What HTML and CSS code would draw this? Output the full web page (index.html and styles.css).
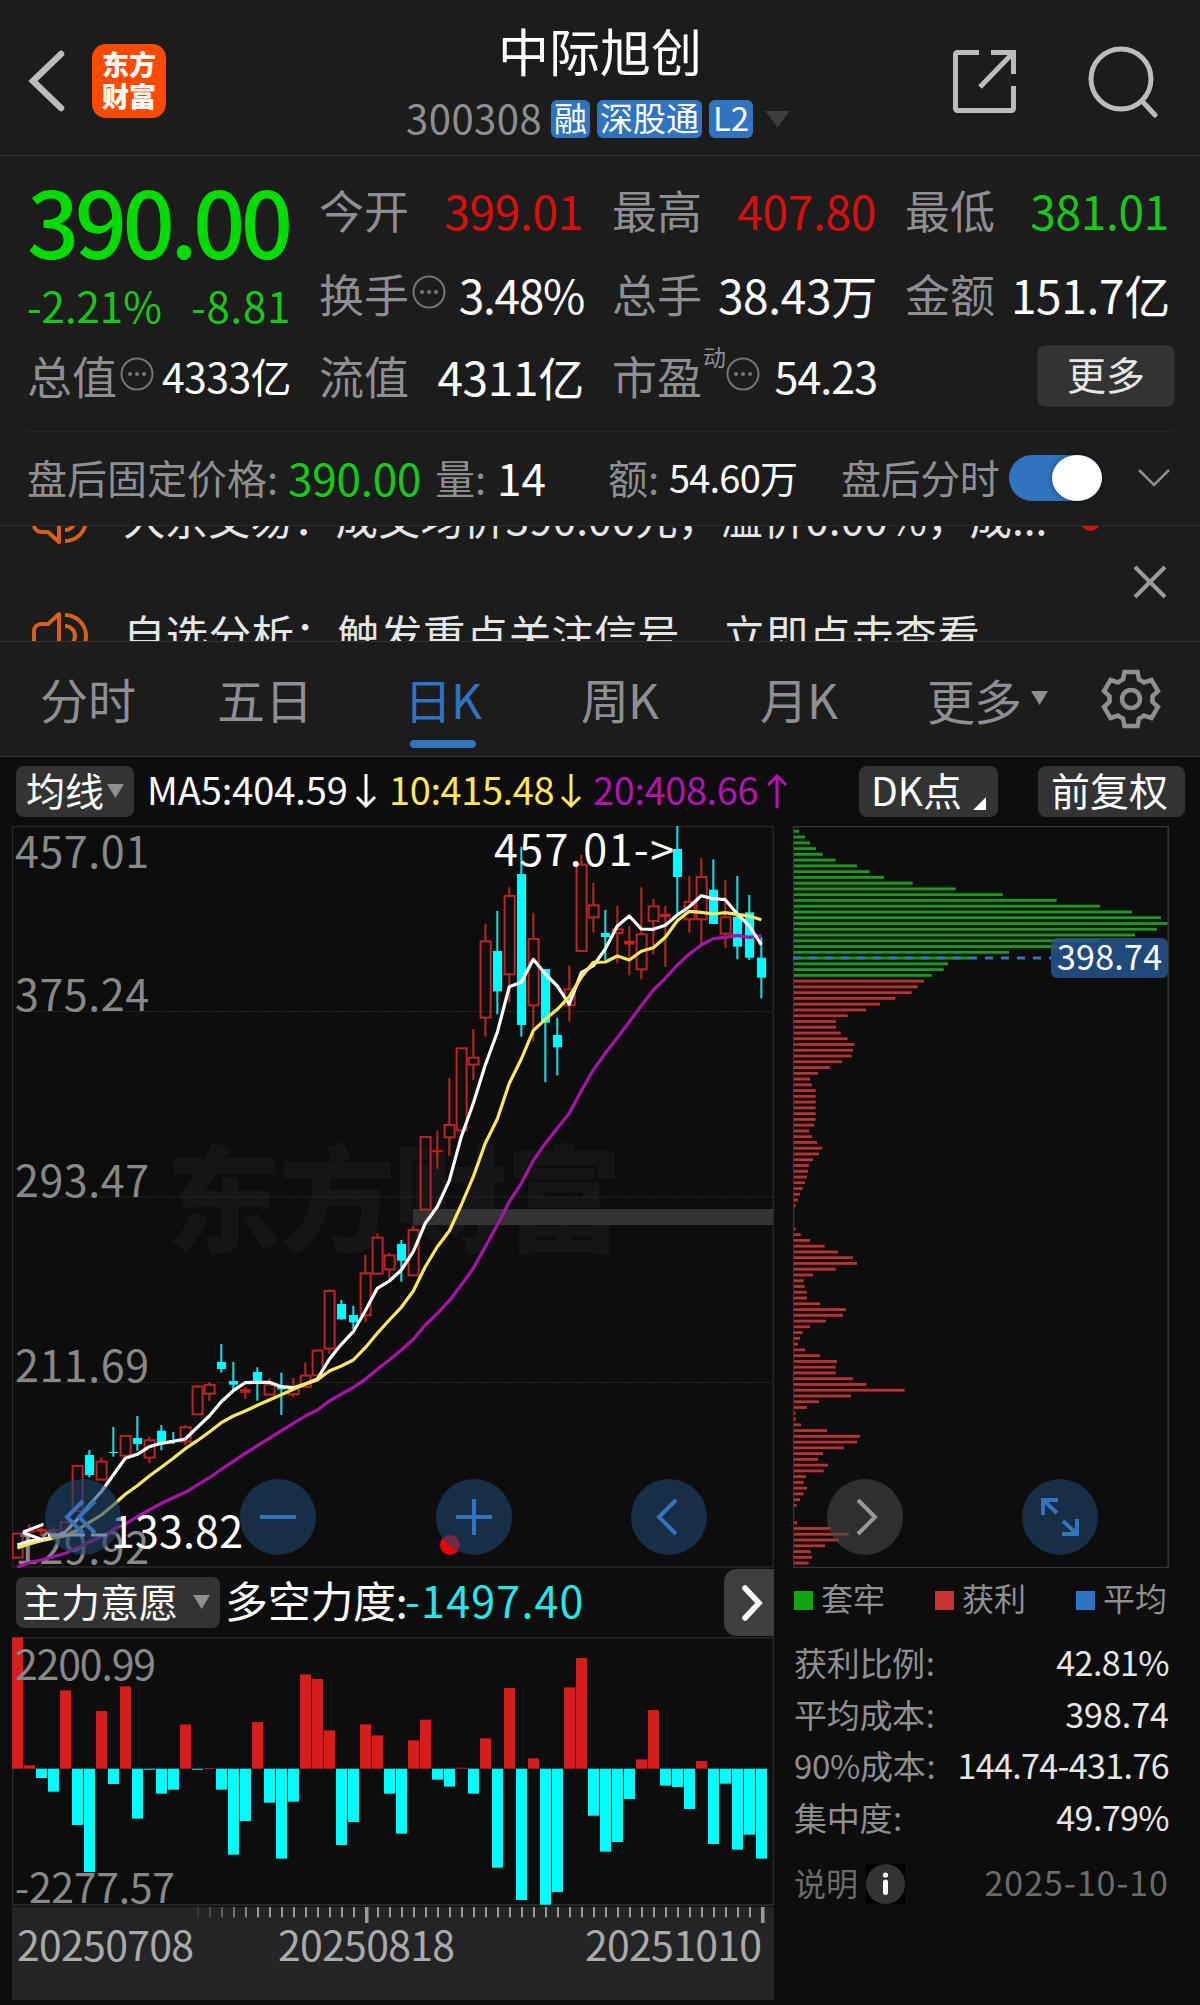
FILE: index.html
```html
<!DOCTYPE html>
<html lang="zh-CN">
<head>
<meta charset="utf-8">
<title>中际旭创 300308</title>
<link rel="stylesheet" href="styles.css">
</head>
<body>
<header class="topbar">
  <div class="top-left">
    <svg class="back" width="38" height="62" viewBox="0 0 38 62"><path d="M33 4 5 31 33 58"/></svg>
    <div class="logo"><span>东方</span><span>财富</span></div>
  </div>
  <div class="title">
    <h1>中际旭创</h1>
    <div class="code-row">
      <span class="code">300308</span>
      <span class="tag tag-rong">融</span><span class="tag tag-sgt">深股通</span><span class="tag tag-l2">L2</span>
      <i class="caret caret-title"></i>
    </div>
  </div>
  <div class="top-right">
    <svg width="66" height="66" viewBox="0 0 66 66"><path d="M27 3.5H5.5a2 2 0 0 0-2 2v54a2 2 0 0 0 2 2h54a2 2 0 0 0 2-2V37M39 3.500H61.500V25M61 4 28 38"/></svg>
    <svg width="74" height="74" viewBox="0 0 74 74"><circle cx="34" cy="34" r="30"/><path d="M55 56 68 70" stroke-linecap="round"/></svg>
  </div>
</header>

<section class="quote">
  <div class="col first">
    <div class="price">390.00</div>
    <div class="change"><span>-2.21%</span><span class="diff">-8.81</span></div>
    <div class="cell small"><label>总值</label><svg class="dots" viewBox="0 0 34 34"><circle cx="17" cy="17" r="15.500"/><path d="M10 17h.1M17 17h.1M24 17h.1"/></svg><b>4333亿</b></div>
  </div>
  <div class="col">
    <div class="cell"><label>今开</label><b class="red">399.01</b></div>
    <div class="cell"><label>换手</label><svg class="dots" viewBox="0 0 34 34"><circle cx="17" cy="17" r="15.500"/><path d="M10 17h.1M17 17h.1M24 17h.1"/></svg><b class="turn">3.48%</b></div>
    <div class="cell last"><label>流值</label><b>4311亿</b></div>
  </div>
  <div class="col">
    <div class="cell"><label>最高</label><b class="red">407.80</b></div>
    <div class="cell"><label>总手</label><b>38.43万</b></div>
    <div class="cell last pe"><label>市盈</label><sup>动</sup><svg class="dots" viewBox="0 0 34 34"><circle cx="17" cy="17" r="15.500"/><path d="M10 17h.1M17 17h.1M24 17h.1"/></svg><b>54.23</b></div>
  </div>
  <div class="col">
    <div class="cell"><label>最低</label><b class="green">381.01</b></div>
    <div class="cell"><label>金额</label><b>151.7亿</b></div>
    <div class="cell last more-cell"><button class="more">更多</button></div>
  </div>
</section>

<section class="after">
  <label class="l1">盘后固定价格:</label><b class="v1">390.00</b>
  <label class="l2">量:</label><b class="v2">14</b>
  <label class="l3">额:</label><b class="v3">54.60万</b>
  <label class="l4">盘后分时</label>
  <span class="toggle"><i></i></span>
  <svg width="36" height="24" viewBox="0 0 36 24"><path d="M3 4 18 19 33 4"/></svg>
</section>

<section class="news">
  <div class="news-list">
    <div class="news-row">
      <svg width="56" height="48" viewBox="0 0 56 48"><path d="M27 2 16 12H9a7 7 0 0 0-7 7v10a7 7 0 0 0 7 7h7l11 10ZM33 3a21 21 0 0 1 0 42M33 14a10 10 0 0 1 0 20"/></svg>
      <span class="n1">大宗交易：成交均价390.00元，溢价0.00%，成...</span><i class="red-dot"></i>
    </div>
    <div class="news-row">
      <svg width="56" height="48" viewBox="0 0 56 48"><path d="M27 2 16 12H9a7 7 0 0 0-7 7v10a7 7 0 0 0 7 7h7l11 10ZM33 3a21 21 0 0 1 0 42M33 14a10 10 0 0 1 0 20"/></svg>
      <span>自选分析：触发重点关注信号，立即点击查看</span>
    </div>
  </div>
  <svg class="close" width="34" height="34" viewBox="0 0 34 34"><path d="M2 2 32 32M32 2 2 32"/></svg>
</section>

<nav class="tabs">
  <a class="t1">分时</a><a class="t2">五日</a><a class="t3 active">日K</a><a class="t4">周K</a><a class="t5">月K</a>
  <a class="t6">更多<i class="caret caret-tab"></i></a>
  <svg width="60" height="60" viewBox="-30 -30 60 60"><path d="M-6.500-27H6.500L8-19.500A21 21 0 0 1 13-16.500L20.500-19 27-8 21.500-2.800V2.800L27 8 20.500 19 13 16.500A21 21 0 0 1 8 19.500L6.500 27H-6.500L-8 19.500A21 21 0 0 1-13 16.500L-20.500 19-27 8-21.500 2.800V-2.800L-27-8-20.500-19-13-16.500A21 21 0 0 1-8-19.500Z"/><circle r="9"/></svg>
</nav>

<section class="ma-row">
  <button class="btn b-ma">均线<i class="caret caret-btn"></i></button>
  <span class="m5">MA5:404.59</span><svg class="arr a5" width="22" height="36" viewBox="0 0 22 36"><path d="M11 1V33M2 24 11 33 20 24"/></svg>
  <span class="m10">10:415.48</span><svg class="arr a10" width="22" height="36" viewBox="0 0 22 36"><path d="M11 1V33M2 24 11 33 20 24"/></svg>
  <span class="m20">20:408.66</span><svg class="arr a20" width="22" height="36" viewBox="0 0 22 36"><path d="M11 35V3M2 12 11 3 20 12"/></svg>
  <button class="btn b-dk">DK点<i class="corner"></i></button>
  <button class="btn b-fq">前复权</button>
</section>

<main class="charts">
  <div class="left">
    <svg id="kline" width="762" height="742" viewBox="12 826 762 742"></svg>
    <div class="ind-row">
      <button class="btn b-ind">主力意愿<i class="caret caret-btn"></i></button>
      <span class="ind-name">多空力度:</span><span class="ind-val">-1497.40</span>
      <button class="next"><svg width="24" height="38" viewBox="0 0 24 38"><path d="M5 4 19 19 5 34"/></svg></button>
    </div>
    <svg id="force" width="762" height="270" viewBox="12 1637 762 270"></svg>
    <svg id="axis" width="762" height="93" viewBox="12 1907 762 93"></svg>
  </div>
  <div class="right">
    <svg id="chips" width="376" height="742" viewBox="793 826 376 742"></svg>
    <div class="legend"><span><i class="g"></i>套牢</span><span><i class="r"></i>获利</span><span><i class="b"></i>平均</span></div>
    <dl class="stats">
      <div><dt>获利比例<u>:</u></dt><dd>42.81%</dd></div>
      <div><dt>平均成本<u>:</u></dt><dd class="avg">398.74</dd></div>
      <div><dt class="n90">90%成本<u>:</u></dt><dd class="range">144.74-431.76</dd></div>
      <div><dt>集中度<u>:</u></dt><dd>49.79%</dd></div>
    </dl>
    <div class="note"><span>说明</span><svg width="39" height="40" viewBox="0 0 39 40"><rect width="39" height="40" fill="#000"/><ellipse cx="19.500" cy="20" rx="19.500" ry="20" fill="#333"/><path d="M19.500 18V28.500" stroke="#fff" stroke-width="5" stroke-linecap="round"/><circle cx="19.500" cy="11" r="2.600" fill="#fff"/></svg><time>2025-10-10</time></div>
  </div>
  <div class="controls">
    <button><svg viewBox="-38 -38 76 76"><path d="M0-16-16 0 0 16M12-16-4 0 12 16"/></svg></button>
    <button><svg viewBox="-38 -38 76 76"><path d="M-18 0H18"/></svg></button>
    <button><svg viewBox="-38 -38 76 76"><path d="M-18 0H18M0-18V18"/></svg></button>
    <button><svg viewBox="-38 -38 76 76"><path d="M7-17-10 0 7 17"/></svg></button>
    <button class="grey"><svg viewBox="-38 -38 76 76"><path d="M-7-17 10 0-7 17"/></svg></button>
    <button><svg viewBox="-38 -38 76 76"><path d="M-17-2V-17H-2M-17-17-3-4M17 2V17H2M17 17 3 4"/></svg></button>
  </div>
</main>
<script src="chart.js"></script>
</body>
</html>
```
FILE: styles.css
```css
* { box-sizing: border-box; }
body { margin: 0; width: 1200px; height: 2005px; overflow: hidden; background: #0d0d0d; color: #fff; font-family: "Noto Sans CJK SC", sans-serif; line-height: 1; }
button { border: 0; padding: 0; margin: 0; font: inherit; color: inherit; }
h1, dl, dd { margin: 0; font-weight: 400; }
b { font-weight: 400; }
svg { display: block; flex: none; }
span, label, b, a, time { white-space: nowrap; }
.red { color: #d80f0f; }
.green { color: #17c917; }
.caret { display: block; width: 18px; height: 14px; background: #8e8e93; clip-path: polygon(0 0, 100% 0, 50% 100%); }

.topbar { height: 156px; background: #1c1c1c; border-bottom: 1px solid #333; display: grid; grid-template-columns: 400px 400px 400px; }
.top-left { display: flex; align-items: flex-start; padding: 44px 0 0 28px; }
.back { margin-top: 6px; fill: none; stroke: #bcbcbc; stroke-width: 6.500; stroke-linecap: round; }
.logo { margin-left: 26px; width: 74px; height: 74px; border-radius: 14px; background: #ff4a00; font-size: 27px; font-weight: 900; display: flex; flex-direction: column; align-items: center; padding-top: 4px; }
.logo span { height: 32px; line-height: 32px; }
.title { padding-top: 24px; }
.title h1 { height: 74px; line-height: 52px; font-size: 51px; text-align: center; }
.code-row { display: flex; align-items: center; height: 40px; margin-top: 1px; padding-left: 6px; }
.code { font-size: 40px; color: #8e8e93; letter-spacing: .5px; width: 145px; line-height: 36px; margin-top: -5px; }
.tag { height: 38px; line-height: 35px; border-radius: 6px; background: #3073c0; font-size: 33px; text-align: center; margin-right: 7px; }
.tag-rong { width: 39px; }
.tag-sgt { width: 105px; }
.tag-l2 { width: 44px; }
.caret-title { background: #3d3d3d; width: 25px; height: 17px; margin-left: 5px; }
.top-right { display: flex; padding: 49px 0 0 152px; }
.top-right svg { fill: none; stroke: #bcbcbc; stroke-width: 5; }
.top-right svg + svg { margin: -4px 0 0 69px; }

.quote { height: 275px; background: #1c1c1c; padding: 14px 0 0 27px; display: grid; grid-template-columns: 264px 265px 265px 265px; column-gap: 28px; }
.cell { height: 84px; display: flex; align-items: center; justify-content: space-between; font-size: 46px; padding-bottom: 5px; }
.cell label { font-size: 45px; color: #8e8e93; }
.cell.last, .cell.small { height: 80px; }
.cell b { margin-left: auto; letter-spacing: -.3px; }
.cell .red, .cell .green { padding-right: 1px; }
.cell .turn { letter-spacing: -1.300px; }
.cell.small b { font-size: 41px; letter-spacing: -.6px; }
.cell .dots { width: 34px; height: 34px; margin: 0 0 3px 3px; }
.dots { fill: none; stroke: #757575; stroke-width: 2; }
.dots path { stroke-width: 4; stroke-linecap: round; }
.price { height: 108px; line-height: 98px; font-size: 92px; font-weight: 500; letter-spacing: -4.700px; color: #00dc00; }
.change { height: 60px; line-height: 54px; display: flex; justify-content: space-between; color: #17c917; font-size: 42px; }
.diff { letter-spacing: .7px; }
.cell.pe b { font-size: 43px; letter-spacing: -1px; }
.pe sup { font-size: 23px; color: #8e8e93; align-self: flex-start; margin: 7px 0 0 1px; line-height: 1; }
.pe .dots { margin-left: 0; }
.more-cell { justify-content: flex-end; padding: 0; margin-right: -5px; }
.more { width: 138px; height: 62px; margin-bottom: 5px; border-radius: 8px; background: #333; border: 1px solid #2b2b2b; font-size: 39px; line-height: 54px; padding-bottom: 7px; color: #e6e6e6; }

.after { height: 95px; background: #1c1c1c; border-bottom: 1px solid #2a2a2a; display: flex; align-items: center; padding: 0 27px; background-image: linear-gradient(#272727, #272727); background-size: 1146px 1px; background-position: 27px 0; background-repeat: no-repeat; font-size: 40px; }
.after label, .after b { line-height: 60px; margin-bottom: 3px; }
.after label { color: #8e8e93; }
.l1 { width: 261px; }
.v1 { width: 147px; font-size: 44px; letter-spacing: -.200px; color: #17c917; }
.l2 { width: 62px; }
.v2 { width: 111px; font-size: 44px; }
.l3 { width: 61px; }
.v3 { width: 172px; font-size: 38px; letter-spacing: -.8px; }
.after .l4 { width: 168px; letter-spacing: -.4px; }
.toggle { width: 93px; height: 46px; border-radius: 23px; background: #3073c0; display: flex; justify-content: flex-end; }
.toggle i { width: 50px; height: 46px; border-radius: 50%; background: #fff; box-shadow: 0 0 6px rgba(0,0,0,.4); }
.after svg { margin-left: 34px; fill: none; stroke: #8e8e93; stroke-width: 2.500; }

.news { height: 115px; background: #1c1c1c; overflow: hidden; display: flex; justify-content: space-between; padding: 0 33px 0 32px; }
.news-list { margin-top: -64px; }
.news-row { height: 116px; display: flex; align-items: center; font-size: 42.500px; color: #e6e6e6; }
.news-row svg { fill: none; stroke: #d9601a; stroke-width: 4; stroke-linejoin: round; }
.news-row span { margin: -6px 0 0 35px; width: 937px; letter-spacing: .35px; }
.news-row .n1 { letter-spacing: 0; }
.red-dot { width: 19px; height: 19px; border-radius: 50%; background: #d80f0f; margin: 2px 0 0 21px; }
.close { margin-top: 39px; fill: none; stroke: #9a9a9a; stroke-width: 4; }

.tabs { height: 116px; background: #1c1c1c; border-top: 1px solid #333; border-bottom: 1px solid #333; display: flex; align-items: center; padding-left: 40px; font-size: 48px; color: #8e8e93; }
.tabs a { height: 100%; line-height: 112px; }
.t1 { width: 177px; }
.t2 { width: 193px; }
.t3, .t4, .t5 { letter-spacing: -1px; }
.t3.active { color: #3073c0; width: 66px; margin-right: 105px; text-indent: -6px; }
.t3.active::after { content: ""; display: block; height: 8px; margin-top: -14px; border-radius: 4px; background: #3073c0; }
.t4 { width: 179px; }
.t5 { width: 167px; }
.t6 { width: 174px; display: flex; align-items: center; letter-spacing: -1px; }
.caret-tab { margin-left: 10px; width: 17px; margin-top: -2px; }
.tabs svg { fill: none; stroke: #8e8e93; stroke-width: 4.500; }

.ma-row { height: 69px; display: flex; align-items: flex-start; padding: 9px 0 0 16px; font-size: 38px; }
.ma-row > span { line-height: 46px; height: 50px; letter-spacing: -.4px; }
.btn { height: 51px; border-radius: 8px; background: #333; display: flex; align-items: flex-start; line-height: 46px; font-size: 39px; flex: none; white-space: nowrap; }
.caret-btn { width: 17px; margin-top: 18px; }
.b-ma { width: 118px; padding-left: 10px; }
.b-ma .caret { margin-left: 3px; }
.ma-row .m5 { width: 208px; margin-left: 13px; letter-spacing: -.1px; }
.arr { fill: none; stroke-width: 3; stroke: #fff; margin-top: 7px; }
.m10 { width: 171px; margin-left: 12px; color: #fce95e; }
.a10 { stroke: #fce95e; }
.m20 { width: 173px; margin-left: 11px; color: #b114b1; }
.a20 { stroke: #b114b1; }
.b-dk { width: 139px; margin-left: 71px; padding-left: 12px; }
.corner { width: 13px; height: 13px; background: #fff; clip-path: polygon(100% 0, 100% 100%, 0 100%); margin: 31px 0 0 11px; }
.b-fq { width: 147px; margin-left: 40px; padding-left: 13px; }

.charts { position: relative; display: flex; padding-left: 12px; height: 1179px; }
.left { width: 762px; }
.right { width: 376px; margin-left: 19px; }
svg text { font-family: "Noto Sans CJK SC", sans-serif; }
.ind-row { height: 69px; display: flex; padding-left: 4px; align-items: flex-start; font-size: 43px; line-height: 56px; }
.b-ind { width: 204px; margin-top: 9px; padding-left: 6px; }
.b-ind .caret { margin-left: 15px; }
.ind-name { width: 179px; margin: 3px 0 0 5px; letter-spacing: -.3px; }
.ind-val { margin: 3px 0 0 1px; color: #27e6e6; letter-spacing: 1.200px; }
.next { width: 50px; height: 67px; margin: 1px 0 0 auto; border-radius: 13px 0 0 13px; background: #3e3e3e; padding-left: 16px; }
.next svg { fill: none; stroke: #fff; stroke-width: 5.500; stroke-linecap: round; }

.controls { position: absolute; left: 45px; top: 653px; display: flex; gap: 119.400px; }
.controls button { width: 76px; height: 76px; border-radius: 50%; background: rgba(31,66,108,.6); }
.controls svg { width: 76px; height: 76px; fill: none; stroke: #3474bd; stroke-width: 4; }
.controls .grey { background: rgba(70,70,70,.6); }
.controls .grey svg { stroke: #999; }

.legend { display: flex; justify-content: space-between; height: 66px; line-height: 59px; font-size: 32px; color: #8e8e93; padding: 0 2px 0 1px; }
.legend span { display: flex; }
.legend i { width: 19px; height: 19px; margin: 23px 8px 0 0; }
.legend .g { background: #13a413; }
.legend .r { background: #c93232; }
.legend .b { background: #3073c0; }
.stats { padding-top: 2px; }
.stats div { height: 51.700px; line-height: 52px; display: flex; justify-content: space-between; font-size: 33px; padding-left: 1px; }
.stats dt { color: #8e8e93; letter-spacing: -.3px; white-space: nowrap; }
.stats u { text-decoration: none; margin-left: 1px; }
.stats dd { font-size: 34px; color: #e6e6e6; letter-spacing: -.6px; }
.stats .avg { letter-spacing: 0; }
.note { height: 66px; display: flex; align-items: center; font-size: 32px; color: #6b6b6b; padding-left: 1px; margin-top: 8px; line-height: 50px; }
.note span, .note time { margin-bottom: 4px; }
.note svg { margin-left: 8px; }
.note time { margin-left: auto; font-size: 34px; letter-spacing: 1px; }
```
FILE: chart.js
```js
// Candles: [up, high, bodyTop, bodyBottom, low], in thirds of a pixel from the chart's y origin.
const shift = (list, dy) => list.map(c => [c[0], ...c.slice(1).map(v => v + dy)]);
const candles = [
  ...shift([
    [1,1060,1060,1132,1135],[1,1033,1049,1056,1062],[1,1043,1048,1054,1068],[1,1040,1050,1053,1062],[1,1026,1026,1062,1062],
    [1,857,857,992,992],[0,810,825,885,892],[1,832,844,898,898],[0,741,816,819,830],[1,767,767,826,826],
    [0,708,774,792,812],[1,770,780,832,850],[0,735,752,790,811],[0,756,780,784,792],[1,735,741,784,795],
    [1,615,619,702,703],[1,607,614,640,662],[0,492,546,567,578],[0,546,603,614,630],[1,620,629,637,656],
    [0,562,576,606,662],[1,595,613,643,643],[0,578,622,628,705],[1,594,625,642,652],[1,548,586,620,620],
    [1,508,511,585,585],[1,328,332,505,522],[0,360,372,418,419],[0,378,405,427,447],[1,225,279,405,427],
    [1,160,172,280,285],[1,218,225,267,297]], 1080),
  ...shift([[0,420,432,482,545],[1,378,389,525,525]], 840),
  [1,950,950,1168,1168],[1,932,992,995,1046],[1,774,914,951,1009],[1,684,684,930,930],[1,627,712,733,780],
  [1,312,363,592,650],[0,273,393,514,583],[1,202,227,462,547],[0,80,162,615,650],[1,278,356,555,664],
  [0,447,447,608,787],[0,593,645,682,766],[1,437,507,555,605],[1,105,133,392,392],[1,189,255,291,338],
  [0,270,339,351,420],[1,257,327,338,430],[1,318,364,372,466],[1,202,342,447,478],[1,237,258,302,404],
  [1,258,283,290,441],[0,18,87,171,285],[1,169,245,297,338],[1,114,170,297,372],[0,118,209,312,312],
  [1,180,291,340,384],[0,168,290,380,418],[0,225,277,413,420],[0,352,413,473,535]
];
const add = (a, d) => a.map(v => v + d);
const ma5 = [...add([1095,1083,1078,1072,1056,1018,975,935,885,835,823,800,790,784,777,742,708,665,632,608,607,607,620,623,612,597,538,493,455,392,325,303], 1080),
  ...add([510,455], 840), 1210,1160,1082,950,850,735,637,500,487,418,462,498,553,458,437,387,318,288,327,328,316,285,260,227,236,239,282,318,374];
const ma10 = [...add([1104,1092,1082,1075,1068,1050,1027,1005,975,943,917,888,862,835,806,782,756,728,708,693,676,660,644,628,612,600,573,558,540,503,460,420], 1080),
  ...add([622,573,500,440], 840), 1233,1155,1070,970,897,790,717,632,598,568,530,472,427,426,408,420,394,383,352,302,274,277,282,278,283,288,299];
const ma20 = [...add([1162,1148,1140,1130,1120,1103,1086,1070,1048,1032,1010,990,970,953,937,915,893,868,844,820,797,775,752,730,708,690,663,642,622,598,568,540], 1080),
  ...add([750,718,675,640,602,555,505,440], 840), 1215,1145,1090,1022,970,925,880,812,750,700,653,605,557,510,475,435,402,375,356,352,346,352,347];

const cx = i => 17.33 + 12 * i;
const cy = v => 820 + v / 3;
const text = (x, y, w, size, fill, s, extra = '') =>
  `<text x="${x}" y="${y}" textLength="${w}" font-size="${size}" fill="${fill}" ${extra}>${s}</text>`;
const line = (pts, color) =>
  `<polyline fill="none" stroke="${color}" stroke-width="3.200" stroke-linejoin="round" points="${pts.map((v, i) => cx(i).toFixed(1) + ',' + cy(v).toFixed(1)).join(' ')}"/>`;

let k = text(166, 1243, 456, 116, '#151515', '东方财富', 'font-weight="900"');
k += '<rect x="12.500" y="826.500" width="761" height="740.500" fill="none" stroke="#262626" stroke-width="1.500"/>';
for (const y of [1011.5, 1197, 1382.5]) k += `<path d="M12 ${y}H773" stroke="#303030" stroke-dasharray="1.500 1.500"/>`;
[['457.01', 868], ['375.24', 1011], ['293.47', 1197], ['211.69', 1382], ['129.92', 1564]].forEach(([s, y]) => k += text(15, y, 134, 43, '#888', s));
k += '<rect x="413" y="1209" width="360" height="16" fill="#333"/>';
candles.forEach(([up, h, t, b, l], i) => {
  const x = cx(i), H = cy(h), T = cy(t), B = cy(b), L = cy(l);
  if (up) {
    k += `<path d="M${x} ${H}V${T}M${x} ${B}V${L}" stroke="#b92525" stroke-width="2"/>`;
    k += b - t < 11
      ? `<rect x="${x - 5.2}" y="${T - .5}" width="10.500" height="${B - T + 1}" fill="#c92020"/>`
      : `<rect x="${x - 4.7}" y="${T + .3}" width="10" height="${B - T}" fill="none" stroke="#b92525" stroke-width="2"/>`;
  } else {
    k += `<path d="M${x} ${H}V${L}" stroke="#20dede" stroke-width="2"/><rect x="${x - 4.4}" y="${T}" width="9.200" height="${B - T}" fill="#00fdfd"/>`;
  }
});
k += line(ma20, '#a814a8') + line(ma5, '#fff') + line(ma10, '#fbe763');
k += text(494, 866, 180, 43, '#fff', '457.01-&gt;') + text(21, 1548, 24, 43, '#fff', '&lt;') + '<path d="M48 1535H85M91 1535H107" stroke="#fff" stroke-width="3"/>' + text(111, 1548, 132, 43, '#fff', '133.82');
k += '<circle cx="450" cy="1545" r="10" fill="#f00000"/>';
document.getElementById('kline').innerHTML = k;

// Long / short force histogram, in thirds of a pixel from the zero line.
const force = [394,10,-28,-69,235,-169,-310,173,-46,247,-150,-3,-75,-63,133,-3,2,-63,-258,-157,140,-102,-270,-99,283,269,115,-229,-160,133,100,-75,-195,85,147,-33,-54,3,-75,91,-297,242,-394,31,-408,-370,244,332,-141,-249,-220,-91,28,176,-51,-55,-121,23,-226,-45,-243,-198,-270];
let f = '<rect x="12.500" y="1637.500" width="761" height="267.500" fill="none" stroke="#2a2a2a" stroke-width="1.800"/>';
force.forEach((v, i) => {
  const h = Math.max(Math.abs(v) / 3, .8);
  f += `<rect x="${12 + 12 * i}" y="${v > 0 ? 1768.7 - h : 1768.7}" width="11" height="${h}" fill="${v > 0 ? '#d41e1e' : '#00fdfd'}"/>`;
});
f += text(15, 1680, 141, 41, '#888', '2200.99') + text(15, 1903, 160, 41, '#888', '-2277.57');
document.getElementById('force').innerHTML = f;

let a = '<rect x="12" y="1907" width="762" height="93" fill="#242426"/>';
for (let i = 0; i < 63; i++) {
  const big = i === 29 || i === 62;
  const o = i < 15 ? 0.05 : Math.min(1, (i - 14) / 6);
  a += `<rect x="${17 + 12 * i}" y="1907" width="${big ? 3.5 : 2}" height="${big ? 16 : i < 15 ? 1.5 : 10.5}" fill="#999" opacity="${o}"/>`;
}
a += text(17, 1961, 177, 41, '#aaa', '20250708') + text(278, 1961, 177, 41, '#aaa', '20250818') + text(585, 1961, 177, 41, '#aaa', '20251010');
document.getElementById('axis').innerHTML = a;

// Chip distribution by price level; the first 26 levels are above the current price.
const chips = [57,75,90,108,128,167,231,269,312,398,527,668,830,960,1056,1143,1163,1131,1065,958,833,687,570,504,491,455,
  432,413,395,346,300,258,203,168,168,182,203,224,219,215,186,150,114,90,96,107,107,107,107,107,107,102,87,96,111,127,117,99,87,84,81,75,68,60,54,47,0,0,0,
  47,62,90,134,174,219,231,167,99,71,74,81,81,120,198,189,138,90,68,60,54,76,120,171,167,167,218,259,374,213,117,81,47,48,63,141,240,231,191,129,114,144,131,78,71,81,71,60,50,0,0,51,153,206,177,135,93,96,86];
let c = '<rect x="793.700" y="826.500" width="374.500" height="741" fill="none" stroke="#363636" stroke-width="1.500"/>';
chips.forEach((e, i) => {
  if (!e) return;
  const y = 831.3 + 5.762 * i, w = (e - 42) / 3, up = i < 26;
  c += `<rect x="794" y="${y - 2.9}" width="${w}" height="5.800" fill="${up ? '#011f01' : '#250000'}"/>`;
  c += `<rect x="794" y="${y - 1.4}" width="${w}" height="2.800" fill="${up ? '#289228' : '#aa3a3a'}"/>`;
});
c += '<path d="M793 958H1052" stroke="#3a72b4" stroke-width="3" stroke-dasharray="8 8"/>';
c += '<rect x="1051" y="938" width="117" height="40" rx="6" fill="#24528a" opacity=".88"/>' + text(1057, 970, 105, 34, '#fff', '398.74');
document.getElementById('chips').innerHTML = c;
```
